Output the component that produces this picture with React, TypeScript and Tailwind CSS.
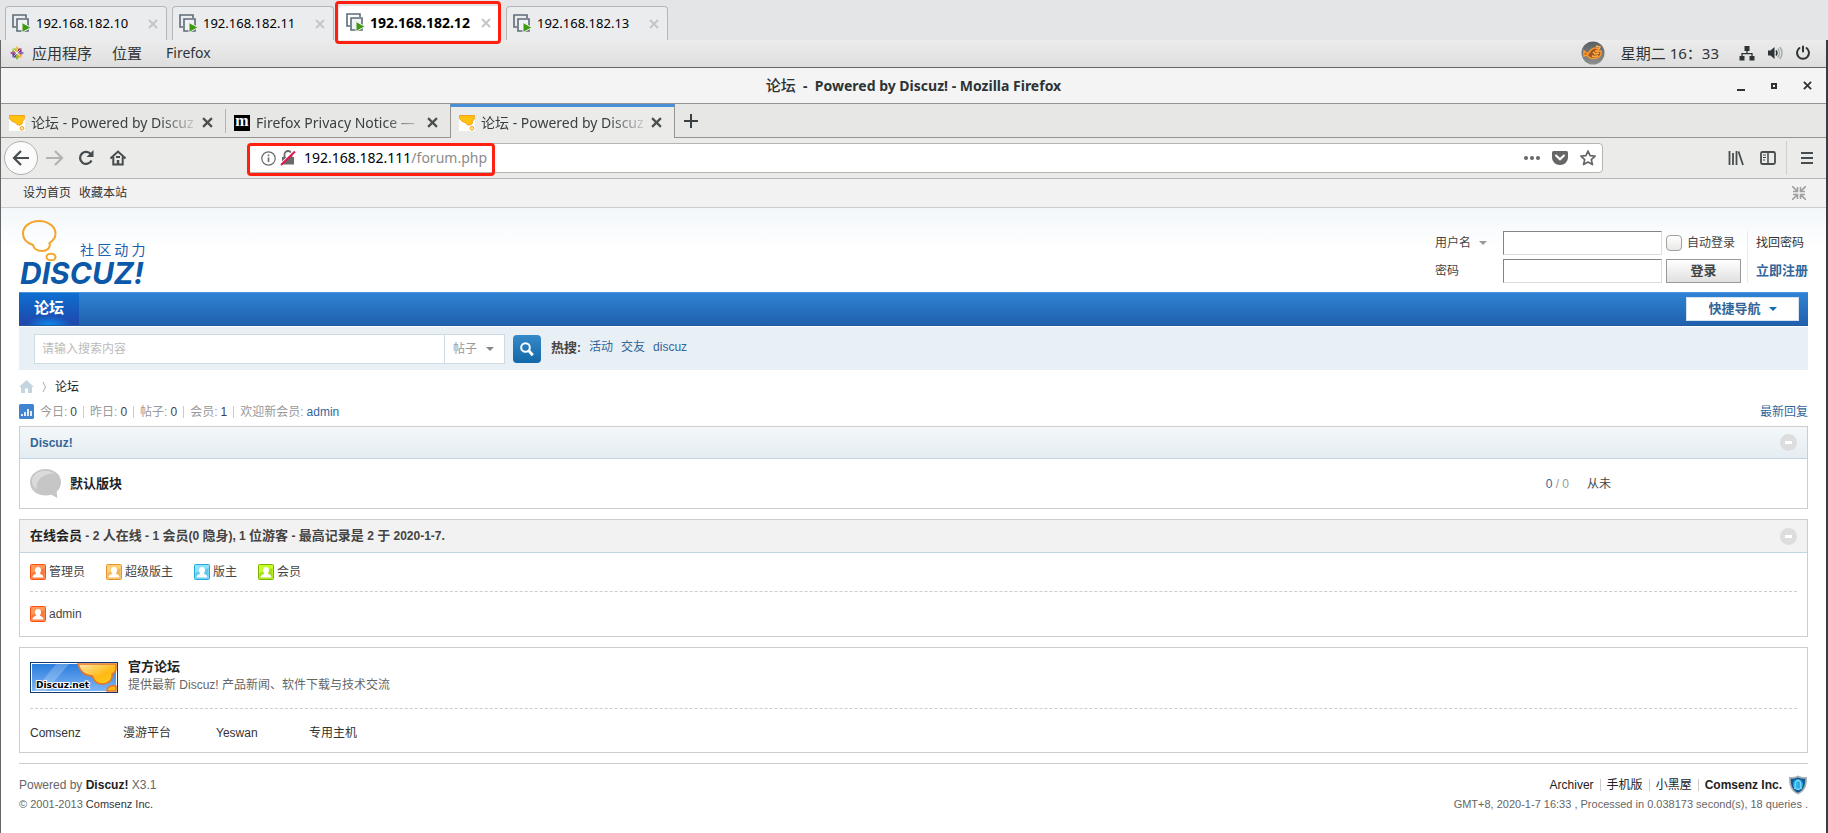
import { ReactNode } from "react";

type vmTab = { ip: string; active?: boolean };

const vmTabs: vmTab[] = [
  { ip: "192.168.182.10" },
  { ip: "192.168.182.11" },
  { ip: "192.168.182.12", active: true },
  { ip: "192.168.182.13" },
];

const stats = [
  { label: "今日", value: "0" },
  { label: "昨日", value: "0" },
  { label: "帖子", value: "0" },
  { label: "会员", value: "1" },
];

const groups = [
  { name: "管理员", from: "#ff9a5a", to: "#fb4f14" },
  { name: "超级版主", from: "#ffd27a", to: "#e39430" },
  { name: "版主", from: "#8fe3ff", to: "#22a8d8" },
  { name: "会员", from: "#c6ff2a", to: "#7eb000" },
];

const friendLinks = ["Comsenz", "漫游平台", "Yeswan", "专用主机"];

const VmIcon = () => (
  <svg width="20" height="20" viewBox="0 0 20 20" fill="none">
    <path d="M4 13H1V1h13v3" stroke="#5d6b78" strokeWidth="1.6" />
    <path d="M5 5h11v12H5z" fill="#f1f2f4" stroke="#5d6b78" strokeWidth="1.6" />
    <path d="M10 8.5l9 5-9 5z" fill="#3f9a12" stroke="#eef0ee" strokeWidth="1" />
  </svg>
);

const Cross = ({ className, size = 10 }: { className: string; size?: number }) => (
  <svg width={size} height={size} viewBox="0 0 10 10" className={className}>
    <path d="M1 1l8 8M9 1l-8 8" stroke="currentColor" strokeWidth="2" />
  </svg>
);

const CentosIcon = () => (
  <svg width="14" height="14" viewBox="0 0 14 14">
    <path d="M2.500 2.500h4v4h-4z" fill="#9ccd2a" />
    <path d="M7.500 2.500h4v4h-4z" fill="#932279" />
    <path d="M2.500 7.500h4v4h-4z" fill="#4b3f96" />
    <path d="M7.500 7.500h4v4h-4z" fill="#efa724" />
    <path d="M7 0l1.800 2.500L7 6 5.200 2.500z" fill="#efc04a" />
    <path d="M14 7l-2.500 1.800L8 7l3.500-1.800z" fill="#8a6ab5" />
    <path d="M7 14l-1.800-2.500L7 8l1.800 3.500z" fill="#8fb936" />
    <path d="M0 7l2.500-1.800L6 7 2.500 8.800z" fill="#b04a9a" />
    <path d="M3.500 3.500l7 7M10.500 3.500l-7 7" stroke="#f3eef3" strokeWidth=".8" />
  </svg>
);

const OrbIcon = () => (
  <svg width="24" height="24" viewBox="0 0 24 24">
    <defs>
      <linearGradient id="orb" x1="0" y1="0" x2="0" y2="1">
        <stop offset="0" stopColor="#5c5f60" />
        <stop offset="1" stopColor="#8d8f8f" />
      </linearGradient>
    </defs>
    <circle cx="12" cy="12" r="11.500" fill="url(#orb)" />
    <path
      d="M3 10l4 3 2-3c2-3 6-4 9-2l-4 2.500 6-.5c1 4-2 7.500-7 7.500-4 0-6-1.500-7-3.500L3 15z"
      fill="#a0561c"
      stroke="#ff9a2e"
      strokeWidth="1.500"
    />
    <path d="M12 11l2 2 4-1M11 15c2 .8 4 .6 6-.5M15 5l4 1-1 2" fill="none" stroke="#ffb050" strokeWidth="1.500" />
  </svg>
);

const NetworkIcon = () => (
  <svg width="16" height="16" viewBox="0 0 16 16" fill="#2e3436">
    <path d="M5.500 1h5v5h-5zM.5 11h5v4.500h-5zM10.500 11h5v4.500h-5z" />
    <path d="M8 5v4M3 11.500V8.700h10v2.800" fill="none" stroke="#2e3436" strokeWidth="1.300" />
  </svg>
);

const VolumeIcon = () => (
  <svg width="16" height="16" viewBox="0 0 16 16" fill="none">
    <path d="M1 5.500h2.500L7.500 2v12l-4-3.500H1z" fill="#2e3436" />
    <path d="M9 5.500c1.200 1.500 1.200 3.500 0 5" stroke="#2e3436" strokeWidth="1.500" />
    <path d="M10.800 3.500c2.200 2.600 2.200 6.400 0 9M12.800 2c3 3.500 3 8.500 0 12" stroke="#a9acad" strokeWidth="1.500" />
  </svg>
);

const PowerIcon = () => (
  <svg width="16" height="16" viewBox="0 0 16 16" fill="none" stroke="#2e3436" strokeWidth="2" strokeLinecap="round">
    <path d="M4.500 3a6 6 0 1 0 7 0M8 1.500v5" />
  </svg>
);

const BubbleFavicon = () => (
  <svg width="16" height="16" viewBox="0 0 16 16">
    <path d="M0 0h16v16H0z" fill="#fff" />
    <path
      d="M0 .5h15.500c.3 3-.5 4.500-2 6 .3 2.500-1.500 4-4 3.500-1.500 0-2.500-1-3-2.500C3 7 .5 4.500 0 2z"
      fill="#ffc20e"
      stroke="#f8a01c"
      strokeWidth="1"
    />
    <circle cx="13" cy="13.300" r="1.800" fill="#ffe9a0" stroke="#f8a01c" />
  </svg>
);

const MozillaFavicon = () => (
  <span className="flex h-4 w-4 items-center justify-center bg-black pb-1 font-['Liberation_Serif',serif] text-base leading-none font-bold text-white">
    m
  </span>
);

const BrowserTab = ({ icon, children, active }: { icon: ReactNode; children: ReactNode; active?: boolean }) => (
  <div
    className={
      active
        ? "flex w-[225px] items-center border-x border-t-3 border-x-[#94958e] border-t-[#4a90d9] bg-[#ebebea] pr-3 pl-2"
        : "flex w-[224px] items-center border-b border-[#94958e] pt-1 pr-3 pl-2"
    }
  >
    {icon}
    <span className="ml-1.5 flex-1 text-sm leading-6 whitespace-nowrap [mask-image:linear-gradient(90deg,#000_75%,transparent)]">
      {children}
    </span>
    <button type="button" aria-label="关闭标签页">
      <Cross className="text-[#4a4f50]" size={11} />
    </button>
  </div>
);

const Caret = ({ className }: { className: string }) => (
  <svg width="8" height="4" viewBox="0 0 8 4" className={className}>
    <path d="M0 0h8L4 4z" fill="currentColor" />
  </svg>
);

const UserIcon = ({ from, to }: { from: string; to: string }) => (
  <svg width="16" height="16" viewBox="0 0 16 16">
    <rect x=".5" y=".5" width="15" height="15" rx="1" fill={from} stroke={to} />
    <path d="M1.500 14.500V9l13-5v10.500z" fill={to} opacity=".45" />
    <path d="M8 3c2 0 3 1.300 3 3.200 0 1.300-.5 2.300-1.200 3 .5 1.300 3.700 1 3.700 4.300h-11c0-3.300 3.200-3 3.700-4.300C5.500 8.500 5 7.500 5 6.200 5 4.300 6 3 8 3z" fill="#fff" />
  </svg>
);

const Collapse = () => (
  <button type="button" aria-label="收起" className="flex h-[17px] w-[17px] items-center justify-center rounded-full bg-[#dddddd]">
    <span className="h-[3px] w-[7px] bg-white" />
  </button>
);

const Pipe = () => <span className="mx-1.5 h-3 w-px bg-[#cccccc]" />;

// bold Chinese runs one size up from the latin text around it
const MixedBold = ({ text }: { text: string }) =>
  text.split(/([\u4e00-\u9fa5]+)/).map((part, i) =>
    i % 2 ? (
      <span key={i} className="text-[13px]">
        {part}
      </span>
    ) : (
      part
    )
  );

const DiscuzLogo = () => (
  <svg width="134" height="76" viewBox="0 0 134 76">
    <g fill="none" stroke="#f5a52c" strokeWidth="2">
      <path d="M14 26C8 24 4 20 4 14.500 4 7.500 11 2 20 2s16.500 5.500 16.500 12.500c0 4-2 7-6 9.500 1.500 4.500-2.500 8-7.500 8-4.500 0-8-2-9-6z" />
      <ellipse cx="32" cy="38" rx="4.500" ry="3.300" />
    </g>
    <text x="61" y="36" fontSize="14" fill="#1a5fb0" fontFamily="'Noto Sans CJK SC', sans-serif">
      社 区 动 力
    </text>
    <text x="1" y="65" fontSize="30" fontWeight="700" fontStyle="italic" fill="#0b58a8" fontFamily="Inter, sans-serif">
      DISCUZ!
    </text>
  </svg>
);

const DiscuzNetBanner = () => (
  <svg width="88" height="31" viewBox="0 0 88 31">
    <defs>
      <linearGradient id="sky" x1="0" y1="0" x2="0" y2="1">
        <stop offset="0" stopColor="#2b7ddd" />
        <stop offset="1" stopColor="#7db6f5" />
      </linearGradient>
      <linearGradient id="gold" x1="0" y1="0" x2="1" y2="1">
        <stop offset="0" stopColor="#ffe9b0" />
        <stop offset=".6" stopColor="#ffb914" />
        <stop offset="1" stopColor="#ffd21e" />
      </linearGradient>
    </defs>
    <path d="M0 0h88v31H0z" fill="#123a6e" />
    <path d="M1 1h86v29H1z" fill="#fff" />
    <path d="M2 2h84v27H2z" fill="url(#sky)" />
    <path d="M26 2h13L16 29H4z" fill="#fff" opacity=".22" />
    <path
      d="M48 2h38v6c-1 2-2 3-4 4 1 6-4 10-10 10-5 0-8-2.500-9.500-8C54 14 50 9 48 2z"
      fill="url(#gold)"
      stroke="#e5762a"
      strokeWidth="1.500"
    />
    <path d="M77 29c0-4 4-6 9-5v5z" fill="#ffb914" stroke="#e5762a" strokeWidth="1.500" />
    <text
      x="6"
      y="26"
      fontSize="9"
      fontWeight="700"
      fontFamily="'DejaVu Sans', sans-serif"
      fill="#000"
      stroke="#fff"
      strokeWidth="2"
      paintOrder="stroke"
    >
      Discuz.net
    </text>
  </svg>
);

const ShieldIcon = () => (
  <svg width="20" height="20" viewBox="0 0 20 20">
    <path d="M10 .5c3 1.500 6 1.800 9 1.500 0 8-1 14-9 17.500C2 16 1 10 1 2c3 .3 6 0 9-1.500z" fill="#a9b0b5" />
    <path d="M10 2.500c2.500 1 5 1.300 7.300 1.200C17.200 10 16 15 10 17.800 4 15 2.800 10 2.700 3.700c2.300.1 4.800-.2 7.300-1.200z" fill="#135a94" />
    <ellipse cx="10" cy="9.500" rx="5" ry="5.500" fill="#1fa7e0" />
    <path d="M6.500 13.500c1-1 .5-3 .8-5C7.600 6.500 8.500 5.500 10 5.500s2.400 1 2.700 3c.3 2-.2 4 .8 5-1-.5-1.500 0-2 .7h-3c-.5-.7-1-1.200-2-.7z" fill="#27b2ea" stroke="#c5ecfb" strokeWidth=".9" />
  </svg>
);

const VmTabs = () => (
  <div className="flex h-10 items-end gap-[5px] bg-[#e4e5e7] pl-[5px] font-['Noto_Sans',sans-serif] text-black">
    {vmTabs.map((tab) => (
      <div
        key={tab.ip}
        className={
          tab.active
            ? "relative flex h-[34px] w-[162px] items-center rounded-t-sm bg-white pr-2.5 pl-[7px] text-sm font-bold"
            : "flex h-[34px] w-[162px] items-center rounded-t-sm border border-b-0 border-[#b4b6b8] bg-[#ebecee] pr-2 pl-1.5 text-[13px]"
        }
      >
        <VmIcon />
        <span className="ml-1 flex-1 whitespace-nowrap">{tab.ip}</span>
        <button type="button" aria-label="关闭">
          <Cross className="text-[#c4c5c6]" />
        </button>
        {tab.active && (
          <span className="pointer-events-none absolute -top-[5px] right-0 -bottom-1 -left-1 z-10 rounded-sm border-3 border-[#ff2010]" />
        )}
      </div>
    ))}
  </div>
);

const GnomeBar = () => (
  <div className="flex h-7 items-center justify-between border-b border-[#666666] bg-gradient-to-b from-[#ececec] to-[#dedede] pr-[15px] pb-0.5 pl-[9px] text-[#2e3436]">
    <div className="flex items-center text-[15px] leading-6">
      <CentosIcon />
      <span className="ml-2">应用程序</span>
      <span className="ml-5">位置</span>
      <span className="ml-6 text-sm">Firefox</span>
    </div>
    <div className="flex items-center">
      <OrbIcon />
      <span className="mr-5 ml-4 text-[15px] leading-6">星期二 16：33</span>
      <div className="flex gap-3">
        <NetworkIcon />
        <VolumeIcon />
        <PowerIcon />
      </div>
    </div>
  </div>
);

const TitleBar = () => (
  <div className="relative flex h-9 items-center justify-center border-b border-[#94958e] bg-[#f4f4f4] text-[#2e3436]">
    <h1 className="text-sm leading-6 font-bold whitespace-pre">
      <span className="text-[15px] font-medium">论坛</span>
      {"  -  Powered by Discuz! - Mozilla Firefox"}
    </h1>
    <div className="absolute right-3.5 flex items-center gap-[26px]">
      <button type="button" aria-label="最小化" className="flex h-[10px] w-2 items-end">
        <span className="h-0.5 w-2 bg-[#2e3436]" />
      </button>
      <button type="button" aria-label="最大化" className="h-1.5 w-1.5 border-2 border-[#2e3436]" />
      <button type="button" aria-label="关闭窗口">
        <Cross className="text-[#2e3436]" size={9} />
      </button>
    </div>
  </div>
);

const TabStrip = () => (
  <div className="flex h-[34px] items-stretch bg-[#e7e7e5] text-[#3a4042]">
    <BrowserTab icon={<BubbleFavicon />}>论坛 - Powered by Discuz</BrowserTab>
    <span className="w-px border-b border-[#94958e] bg-[linear-gradient(#b5b5b0,#b5b5b0)] bg-[length:1px_24px] bg-center bg-no-repeat" />
    <BrowserTab icon={<MozillaFavicon />}>Firefox Privacy Notice —</BrowserTab>
    <BrowserTab icon={<BubbleFavicon />} active>
      论坛 - Powered by Discuz
    </BrowserTab>
    <div className="flex flex-1 items-center border-b border-[#94958e] pl-[9px]">
      <button type="button" aria-label="新建标签页">
        <svg width="14" height="14" viewBox="0 0 14 14">
          <path d="M7 0v14M0 7h14" stroke="#3a4042" strokeWidth="2" />
        </svg>
      </button>
    </div>
  </div>
);

const NavBar = () => (
  <div className="flex h-[41px] items-center border-b border-[#b5b5b2] bg-[#ebebea] pr-[13px] pl-[3px]">
    <button type="button" aria-label="后退" className="flex h-[34px] w-[34px] items-center justify-center rounded-full border border-[#b0b0ad] bg-[#fbfbfb]">
      <svg width="18" height="16" viewBox="0 0 18 16" fill="none" stroke="#474c4e" strokeWidth="2.200">
        <path d="M17 8H2M9 1L2 8l7 7" />
      </svg>
    </button>
    <button type="button" aria-label="前进" className="ml-2">
      <svg width="18" height="16" viewBox="0 0 18 16" fill="none" stroke="#b2b3b3" strokeWidth="2.200">
        <path d="M0 8h15M9 1l7 7-7 7" />
      </svg>
    </button>
    <button type="button" aria-label="刷新" className="ml-3.5">
      <svg width="16" height="16" viewBox="0 0 16 16" fill="none" stroke="#474c4e" strokeWidth="2.300">
        <path d="M13.500 10.500a6 6 0 1 1-.5-6" />
        <path d="M15.500 0v7H8.500z" fill="#474c4e" stroke="none" />
      </svg>
    </button>
    <button type="button" aria-label="主页" className="ml-4">
      <svg width="16" height="16" viewBox="0 0 16 16" fill="none" stroke="#474c4e">
        <path d="M.5 8.500L8 1.500l7.500 7" strokeWidth="2" />
        <path d="M3.300 7v7.500h9.400V7" strokeWidth="2" />
        <path d="M8 15v-5" strokeWidth="2.500" />
        <path d="M6 6h4v2H6z" fill="#474c4e" stroke="none" />
      </svg>
    </button>
    <div className="relative ml-[122px] flex h-[30px] flex-1 items-center rounded border border-[#b5b5b2] bg-white pr-1.5 pl-3">
      <svg width="15" height="15" viewBox="0 0 15 15" fill="none" stroke="#6a6a6a">
        <circle cx="7.500" cy="7.500" r="6.700" strokeWidth="1.200" />
        <path d="M7.500 6.500V11M7.500 3.500v1.700" strokeWidth="1.600" />
      </svg>
      <svg width="16" height="16" viewBox="0 0 16 16" className="ml-1" fill="none">
        <path d="M4.500 7V4.500a3.500 3.500 0 0 1 7 0V7" stroke="#6a6a6a" strokeWidth="1.800" />
        <path d="M2 7h12v7.500H2z" fill="#6a6a6a" />
        <path d="M0 14.500L14.500 0" stroke="#fff" strokeWidth="1.500" />
        <path d="M1 15L15 1.500" stroke="#e8114f" strokeWidth="1.900" />
      </svg>
      <a href="#url" className="ml-2 flex-1 text-sm leading-6 text-black">
        192.168.182.111<span className="text-[#8b8b8b]">/forum.php</span>
      </a>
      <div className="flex items-center gap-3 text-[#666666]">
        <svg width="16" height="16" viewBox="0 0 16 16" fill="currentColor">
          <circle cx="2" cy="8" r="2" />
          <circle cx="8" cy="8" r="2" />
          <circle cx="14" cy="8" r="2" />
        </svg>
        <svg width="16" height="16" viewBox="0 0 16 16">
          <path d="M1.500 1h13A1.500 1.500 0 0 1 16 2.500V7c0 4.500-3.500 8-8 8S0 11.500 0 7V2.500A1.500 1.500 0 0 1 1.500 1z" fill="currentColor" />
          <path d="M4 5.500L8 9.300l4-3.800" fill="none" stroke="#fff" strokeWidth="2" strokeLinecap="round" />
        </svg>
        <svg width="16" height="16" viewBox="0 0 16 16" fill="none" stroke="currentColor" strokeWidth="1.700" strokeLinejoin="round">
          <path d="M8 1l2.100 4.700 5 .5-3.800 3.400 1.200 5L8 12l-4.500 2.600 1.200-5L.9 6.200l5-.5z" />
        </svg>
      </div>
      <span className="pointer-events-none absolute -top-px -bottom-1 -left-0.5 w-[248px] rounded-sm border-3 border-[#ff2010]" />
    </div>
    <div className="ml-[125px] flex items-center text-[#474c4e]">
      <svg width="16" height="16" viewBox="0 0 16 16" stroke="currentColor" strokeWidth="1.800">
        <path d="M1.500 1v14M5 3v12M8.500 1v14M10.500 1.500L15 15" />
      </svg>
      <svg width="16" height="16" viewBox="0 0 16 16" className="ml-4" fill="none" stroke="currentColor">
        <rect x="1" y="2" width="14" height="12" rx="1.500" strokeWidth="1.800" />
        <path d="M8 2v12" strokeWidth="1.500" />
        <path d="M3 5h3M3 7.500h3M3 10h2" />
      </svg>
      <span className="mr-3.5 ml-2.5 h-[34px] w-px bg-[#cfcfcc]" />
      <svg width="12" height="16" viewBox="0 0 12 16" stroke="currentColor" strokeWidth="2">
        <path d="M0 3h12M0 8h12M0 13h12" />
      </svg>
    </div>
  </div>
);

const LoginForm = () => (
  <form className="flex text-xs text-[#444444]" onSubmit={(e) => e.preventDefault()}>
    <div className="grid grid-cols-[64px_159px_75px] items-center gap-x-1 gap-y-1">
      <label className="relative flex items-center">
        <select aria-label="登录方式" className="h-6 w-[60px] appearance-none bg-transparent pr-3">
          <option>用户名</option>
        </select>
        <Caret className="pointer-events-none absolute left-11 text-[#999999]" />
      </label>
      <input type="text" aria-label="用户名" className="h-6 w-full border border-[#dddddd] border-t-[#848484] border-l-[#848484] bg-white px-1" />
      <label className="flex items-center whitespace-nowrap">
        <input type="checkbox" className="mr-[5px] h-4 w-4 appearance-none rounded-sm border border-[#a0a0a0] bg-gradient-to-b from-white to-[#e8e8e6]" />
        自动登录
      </label>
      <label htmlFor="password">密码</label>
      <input id="password" type="password" className="h-6 w-full border border-[#dddddd] border-t-[#848484] border-l-[#848484] bg-white px-1" />
      <button type="submit" className="h-6 border border-[#999999] bg-gradient-to-b from-white to-[#e0e0e0] text-[13px] leading-5 font-bold">
        登录
      </button>
    </div>
    <div className="ml-1.5 flex flex-col justify-between border-l border-[#e3ecf2] pl-2 leading-6">
      <a href="#lost" className="text-[#333333]">
        找回密码
      </a>
      <a href="#register" className="text-[13px] font-bold text-[#336699]">
        立即注册
      </a>
    </div>
  </form>
);

const ForumHeader = () => (
  <header>
    <div className="flex h-[84px] items-center justify-between pt-3.5">
      <a href="#home" aria-label="Discuz! 社区动力">
        <DiscuzLogo />
      </a>
      <LoginForm />
    </div>
    <nav className="flex h-[34px] items-center justify-between border-t border-b border-t-[#4a94dc] border-b-[#1e5a9e] bg-gradient-to-b from-[#2f83d4] to-[#2060ad] pr-[9px]">
      <a
        href="#forum"
        className="flex h-full items-center bg-[radial-gradient(ellipse_at_bottom,#0a8cf0_0%,transparent_55%),linear-gradient(#0d6fd0,#2046ab)] bg-[length:100%_12px,100%_100%] bg-bottom bg-no-repeat px-[15px] pb-0.5 text-[15px] font-bold text-white"
      >
        论坛
      </a>
      <button type="button" className="flex h-6 w-[113px] items-center justify-center gap-2 border border-[#d5e3f0] bg-white text-[13px] font-bold text-[#336699]">
        快捷导航
        <Caret className="text-[#0b6fb5]" />
      </button>
    </nav>
    <div className="flex h-11 items-center border-t border-white bg-[#e8eff5] pl-[15px] text-xs">
      <form className="flex items-center" onSubmit={(e) => e.preventDefault()}>
        <div className="flex h-[30px] border border-[#cedbe2] bg-white">
          <input type="text" aria-label="搜索" placeholder="请输入搜索内容" className="w-[409px] px-[7px] placeholder:text-[#bbbbbb]" />
          <label className="relative flex items-center border-l border-[#cedbe2]">
            <select aria-label="搜索范围" className="h-7 w-[59px] appearance-none bg-white pl-2 text-[#999999]">
              <option>帖子</option>
            </select>
            <Caret className="pointer-events-none absolute right-2.5 text-[#888888]" />
          </label>
        </div>
        <button type="submit" aria-label="搜索" className="ml-2 flex h-7 w-7 items-center justify-center rounded-sm bg-gradient-to-b from-[#3489c8] to-[#1268a8]">
          <svg width="16" height="16" viewBox="0 0 16 16" fill="none" stroke="#fff">
            <circle cx="6.500" cy="6.500" r="4.300" strokeWidth="2" />
            <path d="M9.800 9.800l4 4.500" strokeWidth="2.800" />
          </svg>
        </button>
      </form>
      <div className="ml-2.5 flex items-center gap-2 pb-0.5 text-[#336699]">
        <strong className="text-[#444444]">
          <MixedBold text="热搜:" />
        </strong>
        <a href="#hd">活动</a>
        <a href="#jy">交友</a>
        <a href="#discuz">discuz</a>
      </div>
    </div>
  </header>
);

const PathAndStats = () => (
  <div className="text-xs">
    <div className="flex h-[33px] items-center">
      <a href="#index" aria-label="首页">
        <svg width="15" height="13" viewBox="0 0 15 13" fill="#c5d5e0">
          <path d="M7.500 0L15 7h-2v6H9V8.500H6V13H2V7H0z" />
        </svg>
      </a>
      <svg width="5" height="10" viewBox="0 0 5 10" className="mx-2" fill="none" stroke="#aaaaaa">
        <path d="M1 0l2.500 5L1 10" />
      </svg>
      <a href="#forum" className="text-[#222222]">
        论坛
      </a>
    </div>
    <div className="flex h-[23px] items-center pb-1.5 text-[#999999]">
      <svg width="15" height="15" viewBox="0 0 15 15" className="mr-1.5">
        <rect width="15" height="15" rx="1.500" fill="#4083d0" />
        <path d="M3 12v-2M6 12V8M9 12V5M12 12V7" stroke="#fff" strokeWidth="1.700" />
      </svg>
      {stats.map((item) => (
        <div key={item.label} className="flex items-center">
          {item.label}: <em className="ml-[3px] text-[#444444] not-italic">{item.value}</em>
          <Pipe />
        </div>
      ))}
      <span>欢迎新会员:</span>
      <a href="#admin" className="ml-[3px] text-[#336699]">
        admin
      </a>
      <a href="#new" className="ml-auto text-[#336699]">
        最新回复
      </a>
    </div>
  </div>
);

const ForumPage = () => (
  <div className="flex-1 bg-white font-['Liberation_Sans','Noto_Sans_CJK_SC',sans-serif] text-[#444444]">
    <div className="flex h-[29px] items-center justify-between border-b border-[#cdcdcd] bg-[#f2f2f2] pr-5 pl-[22px] text-xs text-[#333333]">
      <div className="flex gap-2">
        <a href="#sethome">设为首页</a>
        <a href="#fav">收藏本站</a>
      </div>
      <button type="button" aria-label="切换到窄版">
        <svg width="14" height="14" viewBox="0 0 14 14" fill="none" stroke="#a0a0a0" strokeWidth="1.600">
          <path d="M0 0l5 5M5.500 1v4.500H1M14 0L9 5M8.500 1v4.500H13M0 14l5-5M5.500 13V8.500H1M14 14L9 9M8.500 13V8.500H13" />
        </svg>
      </button>
    </div>
    <div className="bg-[linear-gradient(#f2f7fa,#ffffff)] bg-[length:100%_40px] bg-no-repeat pr-[18px] pl-[18px]">
      <ForumHeader />
      <PathAndStats />

      <section className="border border-[#cdcdcd]">
        <h2 className="flex h-8 items-center justify-between border-b border-[#c2d5e3] bg-gradient-to-b from-[#f3f7f9] to-[#e5edf2] px-2.5 text-xs font-bold text-[#336699]">
          Discuz!
          <Collapse />
        </h2>
        <table className="h-[49px] w-full text-xs">
          <tbody>
            <tr>
              <td className="w-[50px] pl-2.5">
                <svg width="31" height="29" viewBox="0 0 31 29">
                  <path d="M15.500 0C24 0 31 5.500 31 13c0 4-1.700 7.300-4.300 9.500l.6 6.500-5.800-3.200C12 28 0 24.500 0 13 0 5.500 7 0 15.500 0z" fill="#c6c6c6" />
                  <path d="M6.500 20C6 10 14 4.500 24 4.500 18-.5 2 1 2 13c0 3 2 5.500 4.500 7z" fill="#dadada" />
                </svg>
              </td>
              <td>
                <a href="#f2" className="text-[13px] font-bold text-[#222222]">
                  默认版块
                </a>
              </td>
              <td className="w-[60px] text-right whitespace-nowrap text-[#999999]">
                <span className="text-[#336699]">0</span> / 0
              </td>
              <td className="w-[238px] pl-[18px]">从未</td>
            </tr>
          </tbody>
        </table>
      </section>

      <section className="mt-2.5 border border-[#cdcdcd]">
        <h2 className="flex h-[33px] items-center justify-between border-b border-[#c2d5e3] bg-[#f2f2f2] px-2.5 text-xs font-bold">
          <span>
            <a href="#online" className="text-[13px] text-[#222222]">
              在线会员
            </a>{" "}
            <MixedBold text="- 2 人在线 - 1 会员(0 隐身), 1 位游客 - 最高记录是 2 于 2020-1-7." />
          </span>
          <Collapse />
        </h2>
        <div className="px-2.5 text-xs">
          <ul className="flex h-[39px] items-center gap-[21px] border-b border-dashed border-[#cdcdcd]">
            {groups.map((group) => (
              <li key={group.name} className="flex items-center gap-[3px]">
                <UserIcon from={group.from} to={group.to} />
                {group.name}
              </li>
            ))}
          </ul>
          <div className="flex h-11 items-center gap-[3px]">
            <UserIcon from="#ff9a5a" to="#fb4f14" />
            <a href="#admin">admin</a>
          </div>
        </div>
      </section>

      <section className="mt-2.5 border border-[#cdcdcd] px-2.5 text-xs">
        <div className="flex h-[61px] items-start gap-2.5 border-b border-dashed border-[#cdcdcd] pt-3.5">
          <DiscuzNetBanner />
          <div className="-mt-1 leading-[18px]">
            <h3 className="text-[13px] font-bold text-[#222222]">官方论坛</h3>
            <p className="text-[#666666]">提供最新 Discuz! 产品新闻、软件下载与技术交流</p>
          </div>
        </div>
        <ul className="flex h-[43px] items-center pt-1">
          {friendLinks.map((link) => (
            <li key={link} className="w-[93px]">
              <a href="#link" className="text-[#333333]">
                {link}
              </a>
            </li>
          ))}
        </ul>
      </section>

      <footer className="mt-2.5 flex items-start justify-between border-t border-[#cdcdcd] pt-[9px] text-xs text-[#666666]">
        <div>
          <p className="leading-6">
            Powered by <strong className="text-[#222222]">Discuz!</strong> X3.1
          </p>
          <p className="text-[11px] leading-[14px]">
            © 2001-2013{" "}
            <a href="#comsenz" className="text-[#333333]">
              Comsenz Inc.
            </a>
          </p>
        </div>
        <div className="flex flex-col items-end">
          <div className="flex h-6 items-center text-[#222222]">
            <a href="#archiver">Archiver</a>
            <Pipe />
            <a href="#mobile">手机版</a>
            <Pipe />
            <a href="#dark">小黑屋</a>
            <Pipe />
            <a href="#comsenz" className="mr-1.5 font-bold">
              Comsenz Inc.
            </a>
            <ShieldIcon />
          </div>
          <p className="text-[11px] leading-[14px]">GMT+8, 2020-1-7 16:33 , Processed in 0.038173 second(s), 18 queries .</p>
        </div>
      </footer>
    </div>
  </div>
);

const App = () => {
  return (
    <div className="flex min-h-screen flex-col">
      <VmTabs />
      <div className="flex flex-1 flex-col border-r-2 border-l border-r-[#3a3d3f] border-l-[#666666] font-['Noto_Sans','Noto_Sans_CJK_SC',sans-serif]">
        <GnomeBar />
        <TitleBar />
        <TabStrip />
        <NavBar />
        <ForumPage />
      </div>
    </div>
  );
};

export default App;
